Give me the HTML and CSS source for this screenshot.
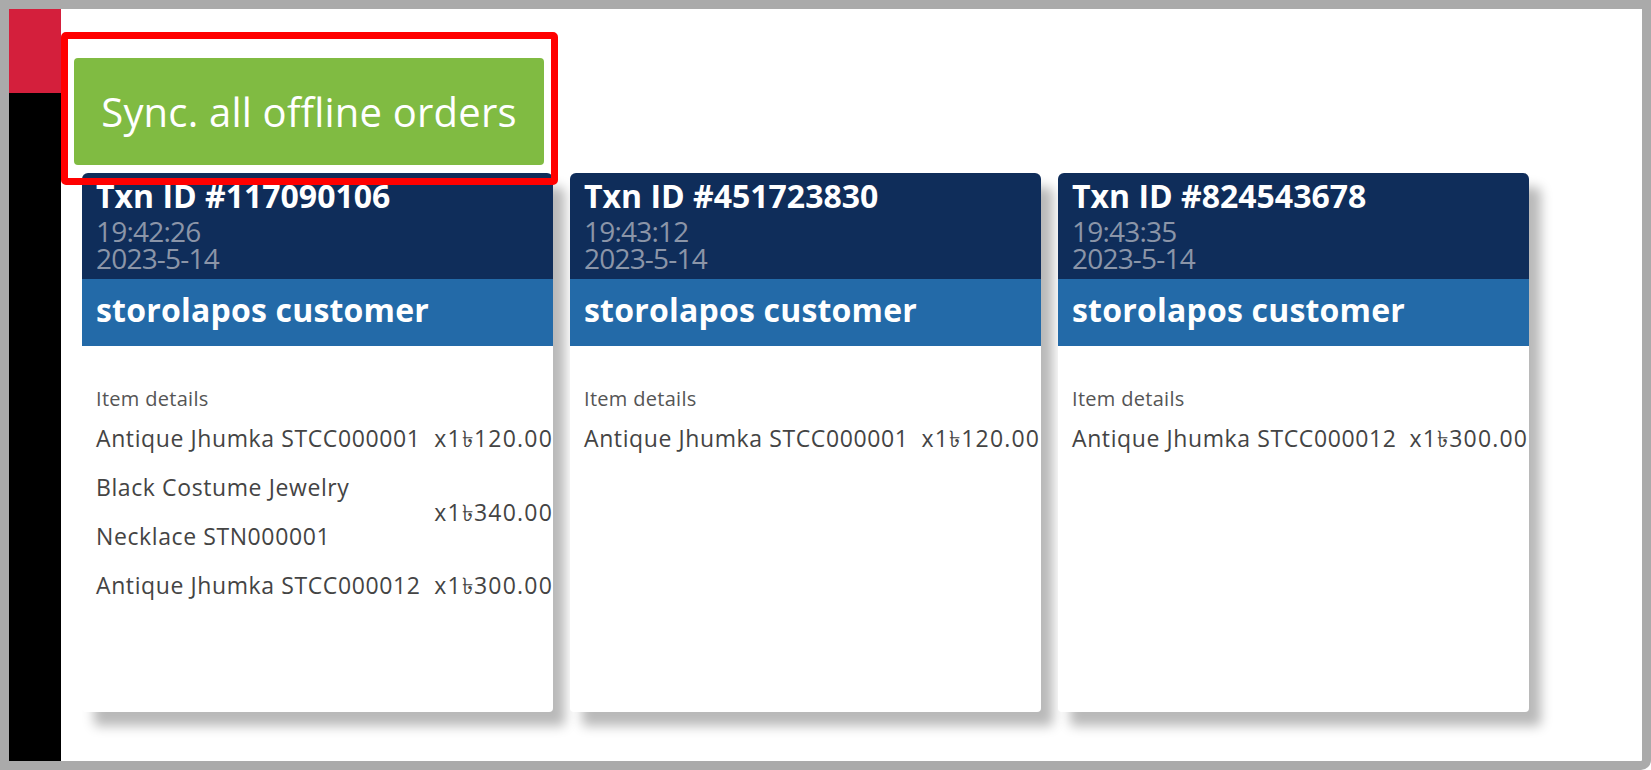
FILE: index.html
```html
<html>
    <head>
        <link rel="stylesheet" href="styles.css">
    </head>

    <body>
        <div class="frame">
            <div class="sidebar">
                <div class="sidebar-top"></div>
            </div>

            <div class="content">
                <!-- highlight drawn over the sync button -->
                <div class="highlight"></div>

                <button class="sync-btn">Sync. all offline orders</button>

                <div class="orders">
                    <div class="order-card">
                        <div class="order-head">
                            <div class="txn">Txn ID #117090106</div>
                            <div class="when">19:42:26</div>
                            <div class="when">2023-5-14</div>
                        </div>
                        <div class="customer">storolapos customer</div>
                        <div class="order-body">
                            <div class="label">Item details</div>
                            <div class="items">
                                <div class="item-name">Antique Jhumka STCC000001</div>
                                <div class="item-price">x1৳120.00</div>
                                <div class="item-name">Black Costume Jewelry Necklace STN000001</div>
                                <div class="item-price">x1৳340.00</div>
                                <div class="item-name">Antique Jhumka STCC000012</div>
                                <div class="item-price">x1৳300.00</div>
                            </div>
                        </div>
                    </div>

                    <div class="order-card">
                        <div class="order-head">
                            <div class="txn">Txn ID #451723830</div>
                            <div class="when">19:43:12</div>
                            <div class="when">2023-5-14</div>
                        </div>
                        <div class="customer">storolapos customer</div>
                        <div class="order-body">
                            <div class="label">Item details</div>
                            <div class="items">
                                <div class="item-name">Antique Jhumka STCC000001</div>
                                <div class="item-price">x1৳120.00</div>
                            </div>
                        </div>
                    </div>

                    <div class="order-card">
                        <div class="order-head">
                            <div class="txn">Txn ID #824543678</div>
                            <div class="when">19:43:35</div>
                            <div class="when">2023-5-14</div>
                        </div>
                        <div class="customer">storolapos customer</div>
                        <div class="order-body">
                            <div class="label">Item details</div>
                            <div class="items">
                                <div class="item-name">Antique Jhumka STCC000012</div>
                                <div class="item-price">x1৳300.00</div>
                            </div>
                        </div>
                    </div>
                </div>
            </div>
        </div>
    </body>
</html>
```

FILE: styles.css
```css
html, body {
    margin: 0;
    height: 100%;
}
body {
    font-family: "Open Sans", "Noto Sans", "DejaVu Sans", sans-serif;
    background-color: #ffffff;
}
.frame {
    box-sizing: border-box;
    height: 100%;
    display: flex;
    border: 9px solid #aaaaaa;
    border-radius: 0 0 10px 0;
    background-color: #ffffff;
}
.sidebar {
    width: 52px;
    flex-shrink: 0;
    background-color: #000000;
}
.sidebar-top {
    height: 84px;
    background-color: #d41f3c;
}
.content {
    position: relative;
    flex: 1;
    padding-top: 49px;
}
.highlight {
    position: absolute;
    left: 0;
    top: 23px;
    width: 497px;
    height: 153px;
    box-sizing: border-box;
    border: 7px solid #ff0000;
    border-radius: 5px;
    z-index: 2;
}
.sync-btn {
    display: block;
    margin-left: 13px;
    width: 470px;
    height: 107px;
    border: none;
    border-radius: 4px;
    background-color: #80bb42;
    color: #ffffff;
    font-family: "Open Sans", sans-serif;
    font-size: 40px;
    letter-spacing: 0.2px;
    padding: 0;
}
.orders {
    display: flex;
    gap: 17px;
    margin-top: 8px;
    padding-left: 21px;
}
.order-card {
    width: 471px;
    height: 539px;
    flex-shrink: 0;
    overflow: hidden;
    border-radius: 6px 6px 4px 4px;
    background-color: #ffffff;
    box-shadow: 12px 14px 12px rgba(0, 0, 0, 0.28);
}
.order-head {
    background-color: #0f2d5a;
    padding: 1px 14px 7px;
}
.txn {
    color: #ffffff;
    font-size: 32px;
    font-weight: bold;
    line-height: 44px;
}
.when {
    color: #8b95a8;
    font-size: 28px;
    line-height: 27px;
    letter-spacing: -0.8px;
}
.customer {
    background-color: #236aa8;
    color: #ffffff;
    font-size: 32px;
    font-weight: bold;
    line-height: 61px;
    padding: 0 14px 6px;
    letter-spacing: 0.2px;
}
.order-body {
    padding: 41px 0 0 14px;
}
.label {
    color: #555555;
    font-size: 20px;
    line-height: 24px;
    letter-spacing: 0.3px;
}
.items {
    display: grid;
    grid-template-columns: fit-content(328px) auto;
    column-gap: 13px;
    margin-top: 3px;
    color: #444444;
    font-size: 23px;
    line-height: 49px;
    letter-spacing: 0.6px;
}
.item-price {
    align-self: center;
    white-space: nowrap;
    letter-spacing: 1.2px;
}
```
